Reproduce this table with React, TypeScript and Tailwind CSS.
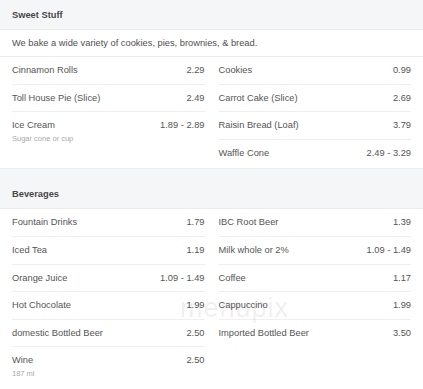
import React from "react";

type Item = { name: string; price: string; note?: string };
type Section = { title: string; description?: string; left: Item[]; right: Item[] };

const menu: Section[] = [
  {
    title: "Sweet Stuff",
    description: "We bake a wide variety of cookies, pies, brownies, & bread.",
    left: [
      { name: "Cinnamon Rolls", price: "2.29" },
      { name: "Toll House Pie (Slice)", price: "2.49" },
      { name: "Ice Cream", price: "1.89 - 2.89", note: "Sugar cone or cup" },
    ],
    right: [
      { name: "Cookies", price: "0.99" },
      { name: "Carrot Cake (Slice)", price: "2.69" },
      { name: "Raisin Bread (Loaf)", price: "3.79" },
      { name: "Waffle Cone", price: "2.49 - 3.29" },
    ],
  },
  {
    title: "Beverages",
    left: [
      { name: "Fountain Drinks", price: "1.79" },
      { name: "Iced Tea", price: "1.19" },
      { name: "Orange Juice", price: "1.09 - 1.49" },
      { name: "Hot Chocolate", price: "1.99" },
      { name: "domestic Bottled Beer", price: "2.50" },
      { name: "Wine", price: "2.50", note: "187 ml" },
    ],
    right: [
      { name: "IBC Root Beer", price: "1.39" },
      { name: "Milk whole or 2%", price: "1.09 - 1.49" },
      { name: "Coffee", price: "1.17" },
      { name: "Cappuccino", price: "1.99" },
      { name: "Imported Bottled Beer", price: "3.50" },
    ],
  },
];

function MenuRow({ item, first }: { item: Item; first: boolean }) {
  return (
    <div className={`pt-[7px] pb-[6.6px] ${first ? "" : "border-t border-[#efefef]"}`}>
      <div className="flex justify-between leading-[13px] text-[#555]">
        <span>{item.name}</span>
        <span>{item.price}</span>
      </div>
      {item.note && (
        <div className="text-[7.5px] leading-[14px] text-[#aaa]">{item.note}</div>
      )}
    </div>
  );
}

function MenuSection({ section }: { section: Section }) {
  return (
    <section className="bg-white">
      <h2 className="h-[30px] flex items-center px-3 pt-[3px] bg-[#f5f6f8] border-b border-[#ececec] font-bold text-[#484848]">
        {section.title}
      </h2>
      {section.description && (
        <p className="h-[27px] flex items-center px-3 pt-[1px] border-b border-[#ececec] text-[#505050]">
          {section.description}
        </p>
      )}
      <div className="grid grid-cols-2 gap-x-[14px] px-3 pb-[2px]">
        <div>
          {section.left.map((item, i) => (
            <MenuRow key={item.name} item={item} first={i === 0} />
          ))}
        </div>
        <div>
          {section.right.map((item, i) => (
            <MenuRow key={item.name} item={item} first={i === 0} />
          ))}
        </div>
      </div>
    </section>
  );
}

export default function App() {
  return (
    <div
      className="relative w-[423px] h-[389px] overflow-hidden bg-[#f5f6f8] text-[9.3px]"
      style={{ fontFamily: '"Liberation Sans", Arial, sans-serif' }}
    >
      <div className="flex flex-col gap-[10px]">
        {menu.map(section => (
          <div key={section.title} className="border-b border-[#ececec]">
            <MenuSection section={section} />
          </div>
        ))}
      </div>
      {/* site watermark */}
      <div className="pointer-events-none absolute left-[180px] top-[288px] text-[27px] font-light tracking-[1px] text-black/[0.08]">
        menupix
      </div>
    </div>
  );
}
